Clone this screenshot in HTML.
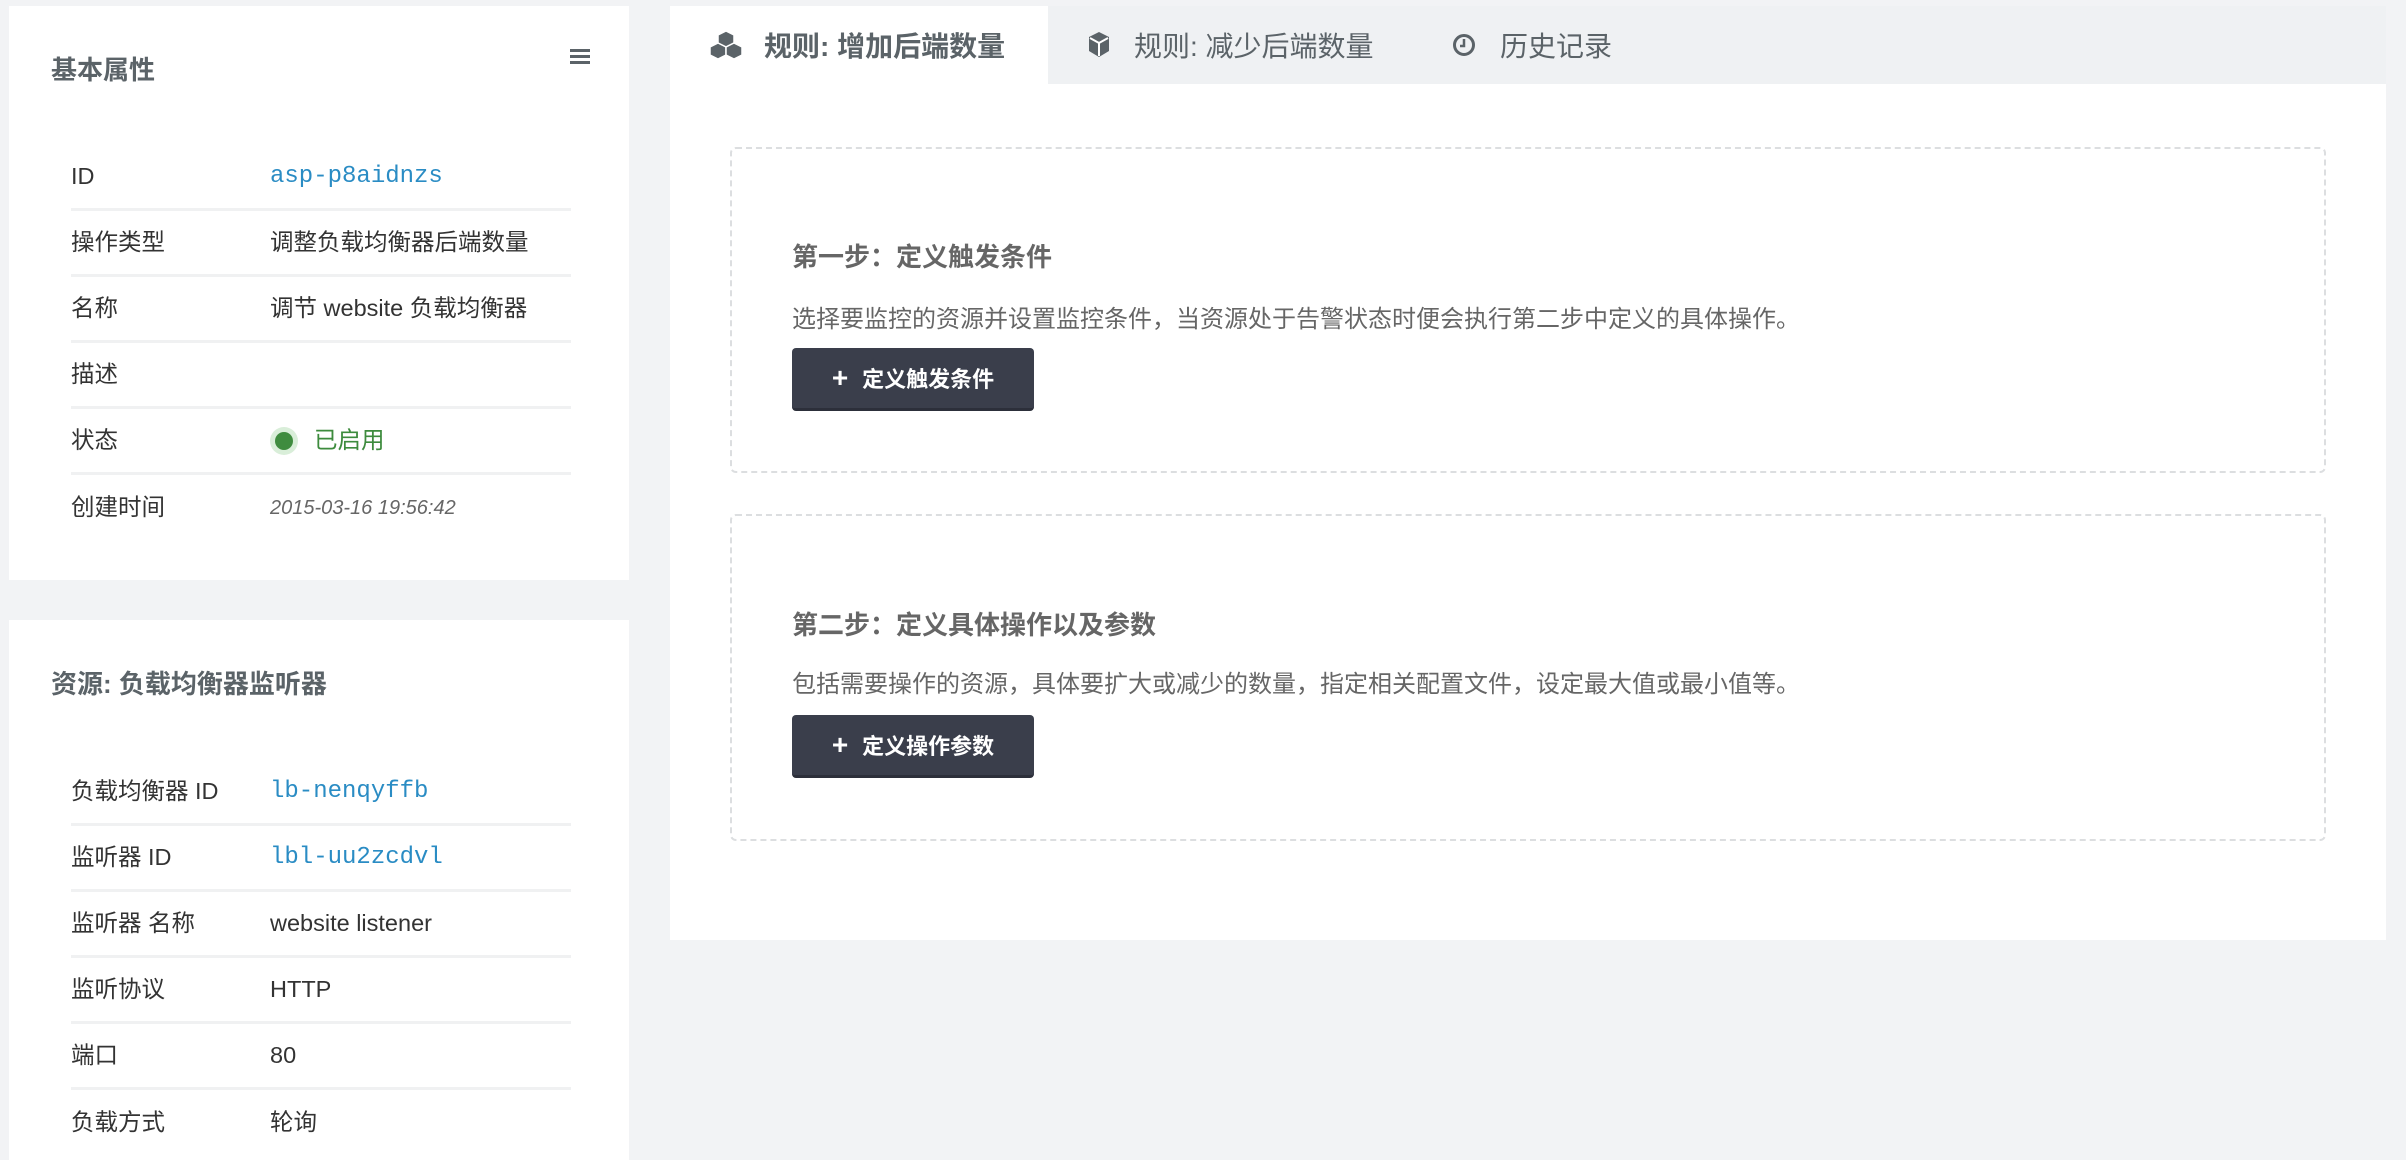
<!DOCTYPE html>
<html><head><meta charset="utf-8"><style>
*{margin:0;padding:0;box-sizing:border-box}
body{width:2406px;height:1154px;background:#f2f3f5;font-family:"Liberation Sans","Noto Sans CJK SC",sans-serif;color:#333;position:relative;overflow:hidden}
.panel{position:absolute;background:#fff}
.ptitle{position:absolute;left:42px;font-size:26px;font-weight:bold;color:#5b6368}
.row{position:absolute;left:62px;width:500px;height:66px;border-bottom:3px solid #f0f1f2;font-size:23.5px;display:flex;align-items:center;line-height:1}
.row .l{width:199px;flex:none}
.row .v{white-space:nowrap;display:flex;align-items:center}
.row.last{border-bottom:none}
.mono{font-family:"Liberation Mono",monospace;color:#2a8cc4;font-size:24px}
.tab{position:absolute;top:6px;height:78px;font-size:28px;color:#5b6368;display:flex;align-items:center}
.box{position:absolute;left:730px;width:1596px;border:2px dashed #dcdee0;border-radius:6px}
.box h3{position:absolute;left:60px;font-size:26px;color:#666;font-weight:bold}
.box p{position:absolute;left:60px;font-size:24px;color:#666;white-space:nowrap}
.btn{position:absolute;left:60px;width:242px;height:63px;background:#3a3e4b;border-radius:4px;color:#fff;font-size:22px;font-weight:bold;display:flex;align-items:center;justify-content:center;border-bottom:3px solid #2c2f3a}
</style></head><body>

<div class="panel" style="left:9px;top:6px;width:620px;height:574px">
  <div class="ptitle" style="top:44px">基本属性</div>
  <svg style="position:absolute;left:561px;top:42px" width="22" height="18"><rect y="1" width="20" height="3" fill="#5b6368"/><rect y="7" width="20" height="3" fill="#5b6368"/><rect y="13" width="20" height="3" fill="#5b6368"/></svg>
  <div class="row" style="top:139px"><span class="l">ID</span><span class="v mono">asp-p8aidnzs</span></div>
  <div class="row" style="top:205px"><span class="l">操作类型</span><span class="v">调整负载均衡器后端数量</span></div>
  <div class="row" style="top:271px"><span class="l">名称</span><span class="v">调节 website 负载均衡器</span></div>
  <div class="row" style="top:337px"><span class="l">描述</span><span class="v"></span></div>
  <div class="row" style="top:403px"><span class="l">状态</span><span class="v" style="color:#3d8b3d"><span style="display:inline-block;width:28px;height:28px;border-radius:50%;background:#d9eed9;position:relative;margin-right:16px"><span style="position:absolute;left:5px;top:5px;width:18px;height:18px;border-radius:50%;background:#3f8c3f"></span></span>已启用</span></div>
  <div class="row last" style="top:469px"><span class="l">创建时间</span><span class="v" style="font-style:italic;color:#666;font-size:20px">2015-03-16 19:56:42</span></div>
</div>

<div class="panel" style="left:9px;top:620px;width:620px;height:540px">
  <div class="ptitle" style="top:44px">资源: 负载均衡器监听器</div>
  <div class="row" style="top:140px"><span class="l">负载均衡器 ID</span><span class="v mono">lb-nenqyffb</span></div>
  <div class="row" style="top:206px"><span class="l">监听器 ID</span><span class="v mono">lbl-uu2zcdvl</span></div>
  <div class="row" style="top:272px"><span class="l">监听器 名称</span><span class="v">website listener</span></div>
  <div class="row" style="top:338px"><span class="l">监听协议</span><span class="v">HTTP</span></div>
  <div class="row" style="top:404px"><span class="l">端口</span><span class="v">80</span></div>
  <div class="row last" style="top:470px"><span class="l">负载方式</span><span class="v">轮询</span></div>
</div>

<div style="position:absolute;left:670px;top:6px;width:1716px;height:78px;background:#eff1f3"></div>
<div class="panel" style="left:670px;top:6px;width:378px;height:80px"></div>
<div class="panel" style="left:670px;top:84px;width:1716px;height:856px"></div>

<div class="tab" style="left:708px;font-weight:bold">
  <svg width="36" height="30" viewBox="0 0 36 30" style="margin-right:20px"><g fill="#5b6368" stroke="#fff" stroke-width="1.5"><path d="M18 1l8 4v8l-8 4-8-4V5z"/><path d="M10 13l8 4v8l-8 4-8-4v-8z"/><path d="M26 13l8 4v8l-8 4-8-4v-8z"/></g></svg>规则: 增加后端数量</div>
<div class="tab" style="left:1086px">
  <svg width="26" height="30" viewBox="0 0 26 30" style="margin-right:22px"><path d="M13 2l10 5v14l-10 6-10-6V7z" fill="#5b6368"/><path d="M4 8l9 5 9-5" fill="none" stroke="#fff" stroke-width="2"/><path d="M13 13v13" stroke="#fff" stroke-width="2"/></svg>规则: 减少后端数量</div>
<div class="tab" style="left:1452px">
  <svg width="24" height="24" viewBox="0 0 24 24" style="margin-right:24px"><circle cx="12" cy="12" r="9.5" fill="none" stroke="#5b6368" stroke-width="3"/><path d="M12 6v7h-4" fill="none" stroke="#5b6368" stroke-width="2.5"/></svg>历史记录</div>

<div class="box" style="top:147px;height:326px">
  <h3 style="top:88px">第一步：定义触发条件</h3>
  <p style="top:150px">选择要监控的资源并设置监控条件，当资源处于告警状态时便会执行第二步中定义的具体操作。</p>
  <div class="btn" style="top:199px"><span style="font-size:28px;margin-right:14px">+</span>定义触发条件</div>
</div>
<div class="box" style="top:514px;height:327px">
  <h3 style="top:89px">第二步：定义具体操作以及参数</h3>
  <p style="top:148px">包括需要操作的资源，具体要扩大或减少的数量，指定相关配置文件，设定最大值或最小值等。</p>
  <div class="btn" style="top:199px"><span style="font-size:28px;margin-right:14px">+</span>定义操作参数</div>
</div>
</body></html>
